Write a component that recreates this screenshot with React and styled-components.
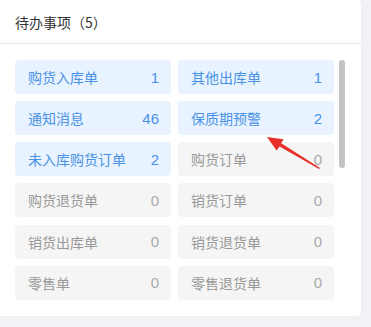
import React from "react";
import styled, { createGlobalStyle } from "styled-components";

const Global = createGlobalStyle`
  html, body { margin: 0; padding: 0; background: #f0f2f5; }
  body { font-family: "Noto Sans CJK SC", "Noto Sans", sans-serif; width: 371px; height: 327px; overflow: hidden; }
`;

const Page = styled.div`
  position: relative;
  width: 371px;
  height: 327px;
`;

const Card = styled.div`
  width: 361px;
  height: 316px;
  background: #fff;
  border-radius: 0 4px 4px 0;
  box-shadow: 0 0 1px rgba(0,0,0,0.08);
  display: flex;
  flex-direction: column;
`;

const Header = styled.div`
  height: 43px;
  border-bottom: 1px solid #e8e8e8;
  display: flex;
  align-items: center;
  padding-left: 15px;
  font-size: 14px;
  color: #333;
`;

const Body = styled.div`
  display: flex;
  padding: 16px 0 0 15px;
`;

const Grid = styled.div`
  display: grid;
  grid-template-columns: 156px 156px;
  column-gap: 7px;
  row-gap: 7px;
`;

const Tile = styled.div`
  height: 34px;
  border-radius: 4px;
  background: ${p => (p.$active ? "#e8f3ff" : "#f5f5f5")};
  color: ${p => (p.$active ? "#4a92e4" : "#999")};
  display: flex;
  align-items: center;
  justify-content: space-between;
  padding: 0 12px 0 13px;
  font-size: 14px;
`;

const Count = styled.span`
  font-family: "Liberation Sans", Arial, sans-serif;
  font-size: 15px;
  color: ${p => (p.$active ? "#4a92e4" : "#aaa")};
`;

const Track = styled.div`
  width: 6px;
  margin-left: 5px;
  height: 240px;
`;

const Thumb = styled.div`
  width: 6px;
  height: 108px;
  border-radius: 3px;
  background: #c4c4c4;
`;

const Arrow = styled.svg`
  position: absolute;
  left: 0;
  top: 0;
  pointer-events: none;
`;

const items = [
  ["购货入库单", 1],
  ["其他出库单", 1],
  ["通知消息", 46],
  ["保质期预警", 2],
  ["未入库购货订单", 2],
  ["购货订单", 0],
  ["购货退货单", 0],
  ["销货订单", 0],
  ["销货出库单", 0],
  ["销货退货单", 0],
  ["零售单", 0],
  ["零售退货单", 0],
];

export default function App() {
  return (
    <Page>
      <Global />
      <Card>
        <Header>待办事项（5）</Header>
        <Body>
          <Grid>
            {items.map(([label, n]) => (
              <Tile key={label} $active={n > 0}>
                <span>{label}</span>
                <Count $active={n > 0}>{n}</Count>
              </Tile>
            ))}
          </Grid>
          <Track>
            <Thumb />
          </Track>
        </Body>
      </Card>
      <Arrow width="371" height="327" viewBox="0 0 371 327">
        <polygon
          points="267,137 283.5,139.3 281.2,143.2 320,168 319,169 279.6,146.6 276.6,150.4"
          fill="#e8302a"
        />
      </Arrow>
    </Page>
  );
}
